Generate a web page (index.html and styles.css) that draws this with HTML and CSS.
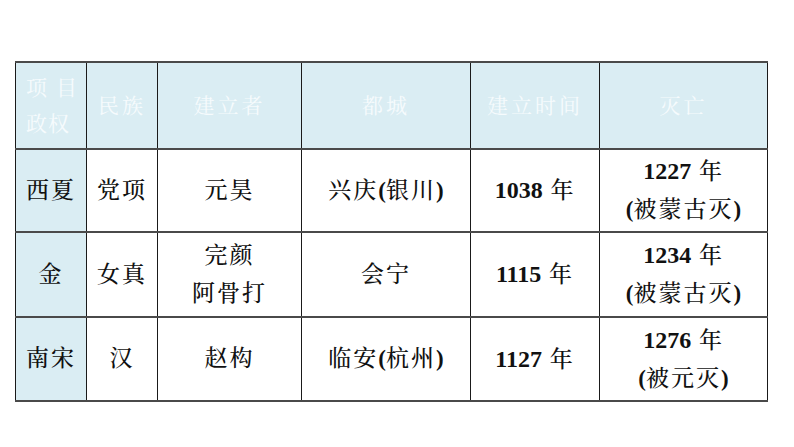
FILE: index.html
```html
<!DOCTYPE html>
<html lang="zh-CN">
<head>
<meta charset="utf-8">
<title>政权表</title>
<link rel="stylesheet" href="styles.css">
</head>
<body>
<div class="page">
  <table class="regimes">
    <colgroup>
      <col class="c1"><col class="c2"><col class="c3"><col class="c4"><col class="c5"><col class="c6">
    </colgroup>
    <thead>
      <tr>
        <th class="corner"><span class="wide">项目</span><br>政权</th>
        <th>民族</th>
        <th>建立者</th>
        <th>都城</th>
        <th>建立时间</th>
        <th>灭亡</th>
      </tr>
    </thead>
    <tbody>
      <tr class="r1">
        <th class="name">西夏</th>
        <td>党项</td>
        <td>元昊</td>
        <td>兴庆<span class="p">(</span>银川<span class="p">)</span></td>
        <td><span class="num">1038</span> 年</td>
        <td class="two"><span class="num">1227</span> 年<br><span class="p">(</span>被蒙古灭<span class="p">)</span></td>
      </tr>
      <tr class="r2">
        <th class="name">金</th>
        <td>女真</td>
        <td class="two">完颜<br>阿骨打</td>
        <td>会宁</td>
        <td><span class="num">1115</span> 年</td>
        <td class="two"><span class="num">1234</span> 年<br><span class="p">(</span>被蒙古灭<span class="p">)</span></td>
      </tr>
      <tr class="r3">
        <th class="name">南宋</th>
        <td>汉</td>
        <td>赵构</td>
        <td>临安<span class="p">(</span>杭州<span class="p">)</span></td>
        <td><span class="num">1127</span> 年</td>
        <td class="two"><span class="num">1276</span> 年<br><span class="p">(</span>被元灭<span class="p">)</span></td>
      </tr>
    </tbody>
  </table>
</div>
</body>
</html>
```
FILE: styles.css
```css
html, body {
  margin: 0;
  padding: 0;
  background: #ffffff;
}

.page {
  padding: 61px 0 0 15px;
}

.regimes {
  border-collapse: collapse;
  table-layout: fixed;
  width: 752px;
  font-family: "Liberation Serif", "Noto Serif CJK SC", "Noto Sans CJK SC", serif;
  color: #111111;
}

.c1 { width: 71px; }
.c2 { width: 71px; }
.c3 { width: 144px; }
.c4 { width: 169px; }
.c5 { width: 129px; }
.c6 { width: 168px; }

.regimes th,
.regimes td {
  padding: 0;
  text-align: center;
  vertical-align: middle;
  border-left: 1.5px solid #1a1a1a;
  border-right: 1.5px solid #1a1a1a;
  border-top: 2px solid #4a4a4a;
  border-bottom: 2px solid #4a4a4a;
  font-size: 23px;
  letter-spacing: 2px;
  font-weight: 500;
  line-height: 30px;
}

.regimes thead th {
  background: #daedf3;
  color: #f6fbfd;
  font-size: 21px;
  font-weight: 400;
  letter-spacing: 3px;
  height: 85px;
}

.regimes thead th.corner {
  line-height: 36px;
  text-align: left;
  padding-left: 10px;
  letter-spacing: 1px;
}

.wide {
  letter-spacing: 9px;
}

.regimes tbody th.name {
  background: #daedf3;
}

.r1 td, .r1 th { height: 81px; }
.r2 td, .r2 th { height: 83px; }
.r3 td, .r3 th { height: 82px; }

.regimes td.two {
  line-height: 38px;
}

.num {
  font-weight: 700;
  letter-spacing: 0;
  font-size: 24px;
}

.p {
  font-weight: 700;
  letter-spacing: 0;
}
```
